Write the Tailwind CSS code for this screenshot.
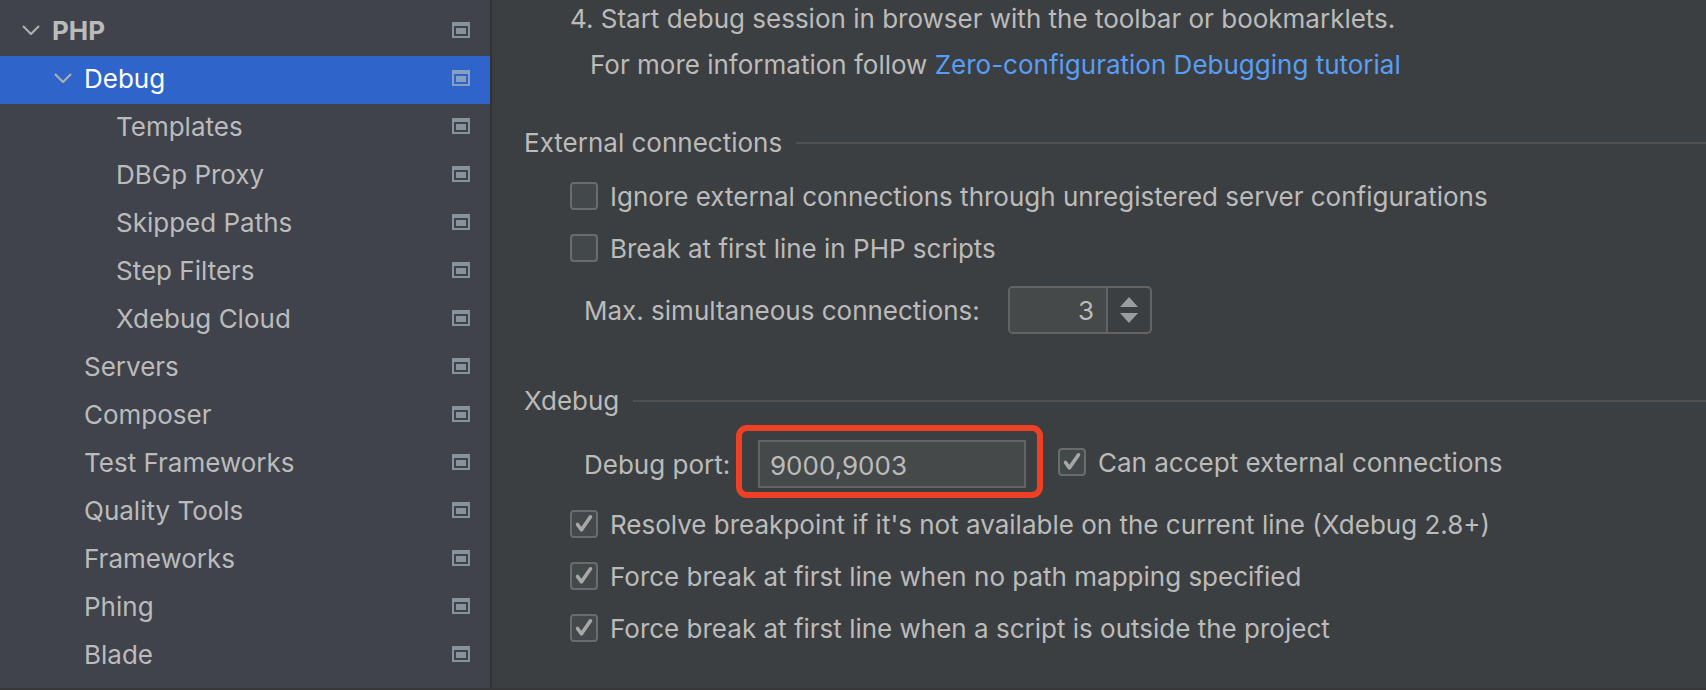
<!DOCTYPE html>
<html lang="en">
<head>
<meta charset="utf-8">
<meta name="viewport" content="width=device-width, initial-scale=1">
<title>Settings – PHP Debug</title>
<script src="https://cdn.jsdelivr.net/npm/@tailwindcss/browser@4"></script>
</head>
<body class="flex min-h-screen flex-col border-b-2 border-[#37373a] bg-[#3c3f41] font-['Inter','Liberation_Sans',sans-serif] text-[26px] leading-8 text-[#bbbbbb]">
<svg class="hidden" aria-hidden="true">
  <symbol id="project" viewBox="0 0 18 16"><path fill="currentColor" fill-rule="evenodd" d="M0 0H18V16H0ZM2 4V14H16V4ZM4 6H14V12H4Z"/></symbol>
  <symbol id="chevron" viewBox="0 0 18 10"><path fill="none" stroke="currentColor" stroke-width="2.2" d="M1 1L9 9L17 1"/></symbol>
  <symbol id="tick" viewBox="0 0 28 28"><path fill="none" stroke="currentColor" stroke-width="3.6" stroke-linecap="round" stroke-linejoin="round" d="M7.5 14.5L11.5 19.8L20.5 6.8"/></symbol>
</svg>
<div class="flex grow">
  <nav aria-label="Settings" class="w-[492px] shrink-0 border-r-2 border-[#323232] bg-[#40434c] pt-2 text-[#bbbbbb]">
    <ul>
      <li><a href="#php" class="flex h-12 items-center pr-5 pb-1 pl-[22px] font-bold"><svg class="mr-3 h-[10px] w-[18px] text-[#adadad]"><use href="#chevron"/></svg><span class="grow pt-[2px]">PHP</span><svg class="h-4 w-[18px] text-[#87939a]"><use href="#project"/></svg></a></li>
      <li><a href="#debug" aria-current="page" class="flex h-12 items-center bg-[#2f65ca] pr-5 pb-1 pl-[54px] text-white"><svg class="mr-3 h-[10px] w-[18px] text-[#adadad]"><use href="#chevron"/></svg><span class="grow pt-[2px]">Debug</span><svg class="h-4 w-[18px] text-[#87a0bf]"><use href="#project"/></svg></a></li>
      <li><a href="#templates" class="flex h-12 items-center pr-5 pb-1 pl-[116px]"><span class="grow pt-[2px]">Templates</span><svg class="h-4 w-[18px] text-[#87939a]"><use href="#project"/></svg></a></li>
      <li><a href="#dbgp" class="flex h-12 items-center pr-5 pb-1 pl-[116px]"><span class="grow pt-[2px]">DBGp Proxy</span><svg class="h-4 w-[18px] text-[#87939a]"><use href="#project"/></svg></a></li>
      <li><a href="#skipped" class="flex h-12 items-center pr-5 pb-1 pl-[116px]"><span class="grow pt-[2px]">Skipped Paths</span><svg class="h-4 w-[18px] text-[#87939a]"><use href="#project"/></svg></a></li>
      <li><a href="#step" class="flex h-12 items-center pr-5 pb-1 pl-[116px]"><span class="grow pt-[2px]">Step Filters</span><svg class="h-4 w-[18px] text-[#87939a]"><use href="#project"/></svg></a></li>
      <li><a href="#cloud" class="flex h-12 items-center pr-5 pb-1 pl-[116px]"><span class="grow pt-[2px]">Xdebug Cloud</span><svg class="h-4 w-[18px] text-[#87939a]"><use href="#project"/></svg></a></li>
      <li><a href="#servers" class="flex h-12 items-center pr-5 pb-1 pl-[84px]"><span class="grow pt-[2px]">Servers</span><svg class="h-4 w-[18px] text-[#87939a]"><use href="#project"/></svg></a></li>
      <li><a href="#composer" class="flex h-12 items-center pr-5 pb-1 pl-[84px]"><span class="grow pt-[2px]">Composer</span><svg class="h-4 w-[18px] text-[#87939a]"><use href="#project"/></svg></a></li>
      <li><a href="#test" class="flex h-12 items-center pr-5 pb-1 pl-[84px]"><span class="grow pt-[2px]">Test Frameworks</span><svg class="h-4 w-[18px] text-[#87939a]"><use href="#project"/></svg></a></li>
      <li><a href="#quality" class="flex h-12 items-center pr-5 pb-1 pl-[84px]"><span class="grow pt-[2px]">Quality Tools</span><svg class="h-4 w-[18px] text-[#87939a]"><use href="#project"/></svg></a></li>
      <li><a href="#frameworks" class="flex h-12 items-center pr-5 pb-1 pl-[84px]"><span class="grow pt-[2px]">Frameworks</span><svg class="h-4 w-[18px] text-[#87939a]"><use href="#project"/></svg></a></li>
      <li><a href="#phing" class="flex h-12 items-center pr-5 pb-1 pl-[84px]"><span class="grow pt-[2px]">Phing</span><svg class="h-4 w-[18px] text-[#87939a]"><use href="#project"/></svg></a></li>
      <li><a href="#blade" class="flex h-12 items-center pr-5 pb-1 pl-[84px]"><span class="grow pt-[2px]">Blade</span><svg class="h-4 w-[18px] text-[#87939a]"><use href="#project"/></svg></a></li>
    </ul>
  </nav>

  <main class="min-w-0 grow pl-8 whitespace-nowrap">
    <div class="flex flex-col gap-2 pl-[46px] leading-[38px]">
      <p>4. Start debug session in browser with the toolbar or bookmarklets.</p>
      <p class="pl-5">For more information follow <a href="#tutorial" class="text-[#589df6]">Zero-configuration Debugging tutorial</a></p>
    </div>

    <section aria-labelledby="external">
      <div class="mt-[43px] flex items-center gap-[14px]">
        <h2 id="external">External connections</h2>
        <div class="h-[2px] grow bg-[#515151]"></div>
      </div>
      <div class="mt-[11px] pl-[46px]">
        <label class="flex h-[52px] items-center gap-3"><input type="checkbox" class="size-7 appearance-none rounded-[4px] border-2 border-[#6b6b6b] bg-[#43494a]"><span class="pt-[2px]">Ignore external connections through unregistered server configurations</span></label>
        <label class="flex h-[52px] items-center gap-3"><input type="checkbox" class="size-7 appearance-none rounded-[4px] border-2 border-[#6b6b6b] bg-[#43494a]"><span class="pt-[2px]">Break at first line in PHP scripts</span></label>
      </div>
      <div class="mt-3 flex items-center pl-[60px]">
        <label for="max" class="w-[424px] pt-[2px]">Max. simultaneous connections:</label>
        <div class="flex h-12 w-36 overflow-hidden rounded-[5px] border-2 border-[#646464]">
          <input id="max" type="text" inputmode="numeric" value="3" class="w-24 min-w-0 grow bg-[#45494a] pt-[2px] pr-3 text-right outline-none">
          <div class="flex w-11 flex-col border-l-2 border-[#646464] text-[#9a9da0]">
            <button type="button" aria-label="Increase" class="flex grow items-end justify-center pb-[3px]"><svg class="h-[10px] w-[18px]" viewBox="0 0 18 10"><path fill="currentColor" d="M9 0L18 10H0Z"/></svg></button>
            <button type="button" aria-label="Decrease" class="flex grow items-start justify-center pt-[3px]"><svg class="h-[10px] w-[18px]" viewBox="0 0 18 10"><path fill="currentColor" d="M0 0H18L9 10Z"/></svg></button>
          </div>
        </div>
      </div>
    </section>

    <section aria-labelledby="xdebug">
      <div class="mt-[51px] flex items-center gap-[14px]">
        <h2 id="xdebug">Xdebug</h2>
        <div class="h-[2px] grow bg-[#515151]"></div>
      </div>
      <div class="mt-[23px] flex items-center pl-[60px]">
        <label for="port" class="w-[174px] pt-[2px]">Debug port:</label>
        <div class="relative mr-8 h-12 w-[268px]">
          <input id="port" type="text" value="9000,9003" class="size-full border-2 border-[#646464] bg-[#45494a] px-[10px] pt-[2px] outline-none">
          <div class="pointer-events-none absolute -top-[15px] -right-[17px] -bottom-[10px] -left-[22px] rounded-[11px] border-6 border-[#ee4024]"></div>
        </div>
        <label class="flex h-11 items-center gap-3 self-start"><span class="grid size-7"><input type="checkbox" checked class="col-start-1 row-start-1 size-7 appearance-none rounded-[4px] border-2 border-[#6b6b6b] bg-[#43494a]"><svg class="pointer-events-none col-start-1 row-start-1 size-7 text-[#a7a7a7]"><use href="#tick"/></svg></span><span class="pt-[2px]">Can accept external connections</span></label>
      </div>
      <div class="mt-[10px] pl-[46px]">
        <label class="flex h-[52px] items-center gap-3"><span class="grid size-7"><input type="checkbox" checked class="col-start-1 row-start-1 size-7 appearance-none rounded-[4px] border-2 border-[#6b6b6b] bg-[#43494a]"><svg class="pointer-events-none col-start-1 row-start-1 size-7 text-[#a7a7a7]"><use href="#tick"/></svg></span><span class="pt-[2px]">Resolve breakpoint if it's not available on the current line (Xdebug 2.8+)</span></label>
        <label class="flex h-[52px] items-center gap-3"><span class="grid size-7"><input type="checkbox" checked class="col-start-1 row-start-1 size-7 appearance-none rounded-[4px] border-2 border-[#6b6b6b] bg-[#43494a]"><svg class="pointer-events-none col-start-1 row-start-1 size-7 text-[#a7a7a7]"><use href="#tick"/></svg></span><span class="pt-[2px]">Force break at first line when no path mapping specified</span></label>
        <label class="flex h-[52px] items-center gap-3"><span class="grid size-7"><input type="checkbox" checked class="col-start-1 row-start-1 size-7 appearance-none rounded-[4px] border-2 border-[#6b6b6b] bg-[#43494a]"><svg class="pointer-events-none col-start-1 row-start-1 size-7 text-[#a7a7a7]"><use href="#tick"/></svg></span><span class="pt-[2px]">Force break at first line when a script is outside the project</span></label>
      </div>
    </section>
  </main>
</div>
</body>
</html>
